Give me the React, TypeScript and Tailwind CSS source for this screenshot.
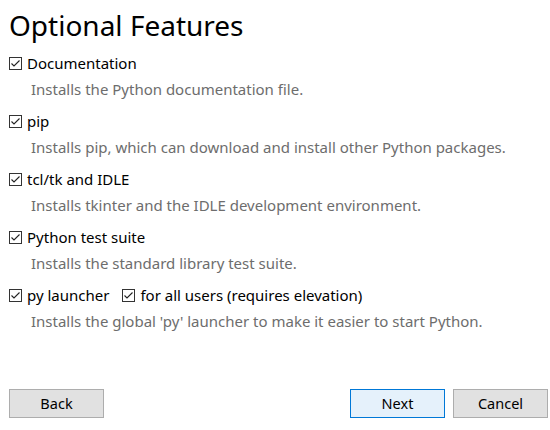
import React from "react";

const features = [
  { label: "Documentation", desc: "Installs the Python documentation file." },
  { label: "pip", desc: "Installs pip, which can download and install other Python packages." },
  { label: "tcl/tk and IDLE", desc: "Installs tkinter and the IDLE development environment." },
  { label: "Python test suite", desc: "Installs the standard library test suite." },
];

function Check() {
  return (
    <svg width="13" height="13" viewBox="0 0 13 13" className="shrink-0">
      <rect x="0.5" y="0.5" width="12" height="12" fill="#fff" stroke="#333" />
      <polyline points="2.5,6.5 5,9 10.5,3.5" fill="none" stroke="#222" strokeWidth="1.1" />
    </svg>
  );
}

function Btn({ children, primary }: { children: React.ReactNode; primary?: boolean }) {
  return (
    <button
      className={`w-[95px] h-[29px] text-[14.5px] text-black border ${
        primary ? "bg-[#e5f1fb] border-[#0078d7]" : "bg-[#e1e1e1] border-[#adadad]"
      }`}
    >
      {children}
    </button>
  );
}

export default function App() {
  return (
    <div
      className="w-[550px] h-[430px] bg-white flex flex-col pl-[9px] pr-[2px] overflow-hidden"
      style={{ fontFamily: '"Noto Sans", "Open Sans", sans-serif' }}
    >
      <h1 className="text-[28px] leading-[34px] mt-[8px] text-black">Optional Features</h1>
      <div className="flex flex-col mt-[11px]">
        {features.map((f) => (
          <div key={f.label} className="flex flex-col mb-[12px]">
            <div className="flex items-center gap-[5px] h-[20px]">
              <Check />
              <span className="text-[15px] text-black">{f.label}</span>
            </div>
            <div className="pl-[22px] mt-[6px] text-[15px] leading-[20px] text-[#6d6d6d]">{f.desc}</div>
          </div>
        ))}
        <div className="flex flex-col">
          <div className="flex items-center h-[20px]">
            <div className="flex items-center gap-[5px]">
              <Check />
              <span className="text-[15px] text-black">py launcher</span>
            </div>
            <div className="flex items-center gap-[5px] ml-[13px]">
              <Check />
              <span className="text-[15px] text-black">for all users (requires elevation)</span>
            </div>
          </div>
          <div className="pl-[22px] mt-[6px] text-[15px] leading-[20px] text-[#6d6d6d]">
            Installs the global 'py' launcher to make it easier to start Python.
          </div>
        </div>
      </div>
      <div className="flex-1" />
      <div className="flex items-center mb-[12px]">
        <Btn>Back</Btn>
        <div className="flex-1" />
        <div className="flex gap-[8px]">
          <Btn primary>Next</Btn>
          <Btn>Cancel</Btn>
        </div>
      </div>
    </div>
  );
}
